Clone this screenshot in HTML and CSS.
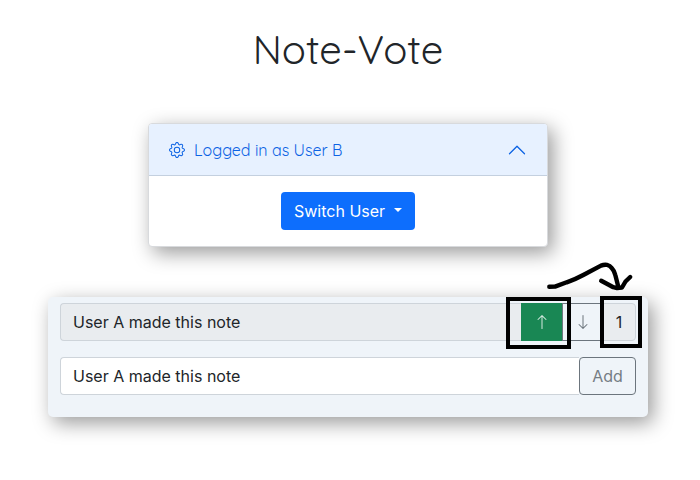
FILE: index.html
```html
<!DOCTYPE html>
<html lang="en">
<head>
<meta charset="utf-8">
<title>Note-Vote</title>
<link rel="stylesheet" href="styles.css">
</head>
<body>
<h1 class="title">Note-Vote</h1>
<section class="account">
  <header class="account-header">
    <svg class="icon" viewBox="0 0 16 16"><path d="M8 4.754a3.246 3.246 0 1 0 0 6.492 3.246 3.246 0 0 0 0-6.492zM5.754 8a2.246 2.246 0 1 1 4.492 0 2.246 2.246 0 0 1-4.492 0z"/><path d="M9.796 1.343c-.527-1.79-3.065-1.79-3.592 0l-.094.319a.873.873 0 0 1-1.255.52l-.292-.16c-1.64-.892-3.433.902-2.54 2.541l.159.292a.873.873 0 0 1-.52 1.255l-.319.094c-1.79.527-1.79 3.065 0 3.592l.319.094a.873.873 0 0 1 .52 1.255l-.16.292c-.892 1.64.901 3.434 2.541 2.54l.292-.159a.873.873 0 0 1 1.255.52l.094.319c.527 1.79 3.065 1.79 3.592 0l.094-.319a.873.873 0 0 1 1.255-.52l.292.16c1.64.893 3.434-.902 2.54-2.541l-.159-.292a.873.873 0 0 1 .52-1.255l.319-.094c1.79-.527 1.79-3.065 0-3.592l-.319-.094a.873.873 0 0 1-.52-1.255l.16-.292c.893-1.64-.902-3.433-2.541-2.54l-.292.159a.873.873 0 0 1-1.255-.52l-.094-.319zm-2.633.283c.246-.835 1.428-.835 1.674 0l.094.319a1.873 1.873 0 0 0 2.693 1.115l.291-.16c.764-.415 1.6.42 1.184 1.185l-.159.292a1.873 1.873 0 0 0 1.116 2.692l.318.094c.835.246.835 1.428 0 1.674l-.319.094a1.873 1.873 0 0 0-1.115 2.693l.16.291c.415.764-.42 1.6-1.185 1.184l-.291-.159a1.873 1.873 0 0 0-2.693 1.116l-.094.318c-.246.835-1.428.835-1.674 0l-.094-.319a1.873 1.873 0 0 0-2.692-1.115l-.292.16c-.764.415-1.6-.42-1.184-1.185l.159-.291A1.873 1.873 0 0 0 1.945 8.93l-.319-.094c-.835-.246-.835-1.428 0-1.674l.319-.094A1.873 1.873 0 0 0 3.06 4.377l-.16-.292c-.415-.764.42-1.6 1.185-1.184l.292.159a1.873 1.873 0 0 0 2.692-1.115l.094-.319z"/></svg>
    <span class="account-name">Logged in as User B</span>
    <svg class="chevron" viewBox="0 0 16 16"><path d="M1.646 4.646a.5.5 0 0 1 .708 0L8 10.293l5.646-5.647a.5.5 0 0 1 .708.708l-6 6a.5.5 0 0 1-.708 0l-6-6a.5.5 0 0 1 0-.708z"/></svg>
  </header>
  <div class="account-body">
    <button class="switch">Switch User<span class="caret"></span></button>
  </div>
</section>
<section class="notes">
  <div class="row">
    <div class="field locked">User A made this note</div>
    <button class="vote up"><svg class="icon" viewBox="0 0 16 16"><path d="M8 15a.5.5 0 0 0 .5-.5V2.707l3.146 3.147a.5.5 0 0 0 .708-.708l-4-4a.5.5 0 0 0-.708 0l-4 4a.5.5 0 1 0 .708.708L7.5 2.707V14.5a.5.5 0 0 0 .5.5z"/></svg></button>
    <button class="vote down"><svg class="icon" viewBox="0 0 16 16"><path d="M8 1a.5.5 0 0 1 .5.5v11.793l3.146-3.147a.5.5 0 0 1 .708.708l-4 4a.5.5 0 0 1-.708 0l-4-4a.5.5 0 0 1 .708-.708L7.5 13.293V1.5A.5.5 0 0 1 8 1z"/></svg></button>
    <div class="count">1</div>
  </div>
  <div class="row">
    <div class="field">User A made this note</div>
    <button class="add">Add</button>
  </div>
</section>
<svg class="sketch" viewBox="0 0 700 480">
  <rect x="508" y="299" width="61" height="48"/>
  <rect x="602" y="298" width="38" height="48"/>
  <path class="stroke" d="M549.3 286.8 L555 286.6 L566.7 282.3 Q575 279.5 583.3 275 L601 265.6 Q604 264.5 607 264.9 Q610 265.5 611.7 268 Q614.5 271 615.3 275 L618.5 287.5"/>
  <path class="stroke" d="M601.2 280.7 L607.3 284 L613.3 287.2 L617 288 L622 287.5 L625.5 281.5 L630.2 277"/>
</svg>
</body>
</html>
```
FILE: styles.css
```css
* { box-sizing: border-box; }
body {
  margin: 0;
  height: 480px;
  overflow: hidden;
  background: #fff;
  color: #212529;
  font: 16px/24px Inter, sans-serif;
  display: flex;
  flex-direction: column;
  align-items: center;
}
.title {
  margin: 25px 4px 0 0;
  height: 48px;
  font: 400 40px/48px Quicksand, Lato, sans-serif;
}
.account, .notes { box-shadow: 5px 6px 20px rgba(0, 0, 0, .4); }
.account {
  width: 400px;
  height: 124px;
  margin: 50px 4px 0 0;
  border: 1px solid #d8dadd;
  border-radius: 4px;
  background: #fff;
  overflow: hidden;
}
.account-header {
  height: 52px;
  padding: 0 20px;
  display: flex;
  align-items: center;
  background: #e7f1ff;
  color: #0c63e4;
  border-bottom: 1px solid #c4d0df;
}
.account-name {
  flex: 1;
  margin-left: 9px;
  font: 400 16px/24px Quicksand, Lato, sans-serif;
}
.icon { width: 16px; height: 16px; display: block; fill: currentColor; }
.chevron { width: 20px; height: 20px; fill: currentColor; transform: rotate(180deg); }
.account-body { padding-top: 16px; display: flex; justify-content: center; }
button { font: inherit; margin: 0; }
.switch {
  width: 134px;
  height: 38px;
  padding: 0 0 0 13px;
  display: flex;
  align-items: center;
  border: 0;
  border-radius: 4px;
  background: #0d6efd;
  color: #fff;
}
.caret {
  margin: -3px 0 0 9px;
  border: 4.8px solid transparent;
  border-top-color: #fff;
  border-bottom: 0;
}
.notes {
  width: 600px;
  height: 120px;
  margin: 50px 4px 0 0;
  padding: 6px 12px;
  display: flex;
  flex-direction: column;
  gap: 16px;
  border-radius: 5px;
  background: #eff4f9;
}
.row { display: flex; height: 38px; }
.field {
  flex: 1;
  padding: 6px 12px;
  border: 1px solid #ced4da;
  border-right: 0;
  border-radius: 4px 0 0 4px;
  background: #fff;
}
.locked, .count { background: #e9ecef; }
.vote { padding: 0; display: flex; align-items: center; justify-content: center; }
.up { width: 41px; border: 0; background: #198754; color: #d6eae0; }
.down { width: 41px; border: 1px solid #6c757d; background: transparent; color: #6c757d; }
.count {
  width: 34px;
  margin-left: -1px;
  border: 1px solid #ced4da;
  border-radius: 0 4px 4px 0;
  line-height: 36px;
  text-align: center;
}
.add {
  width: 57px;
  padding: 0;
  border: 1px solid #6c757d;
  border-radius: 4px;
  background: transparent;
  color: #757d84;
}
.sketch {
  position: absolute;
  inset: 0;
  width: 700px;
  height: 480px;
  fill: none;
  stroke: #000;
  stroke-width: 4;
  pointer-events: none;
}
.stroke { stroke-width: 4.4; stroke-linecap: round; stroke-linejoin: round; }
```
